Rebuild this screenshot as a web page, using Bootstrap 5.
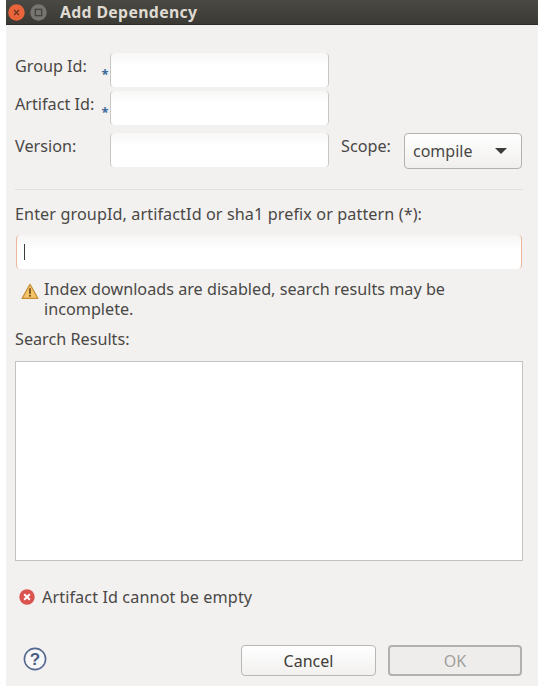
<!DOCTYPE html>
<html lang="en"><head><meta charset="utf-8"><title>Add Dependency</title>
<link href="https://cdn.jsdelivr.net/npm/bootstrap@5.3.0/dist/css/bootstrap.min.css" rel="stylesheet">
<style>
html,body{height:100%;margin:0;overflow:hidden}
body{background:#fff;font-family:"Noto Sans","Open Sans",sans-serif;font-size:16.2px;color:#4a4845;line-height:20px}
.dlg{margin-left:6px;height:686px;background:#f2f1f0;display:flex;flex-direction:column}
.tbar{height:25px;background:linear-gradient(#4b4943,#3b3933);color:#dfdbd2;font-weight:700;font-size:15.8px;letter-spacing:.35px;padding-left:2px;gap:5px;flex:none;border-bottom:1px solid #2e2c28}
.ttl{margin-left:8px}
.wbody{padding:28px 15px 0 9px;flex:1;display:flex;flex-direction:column}
.frow{display:flex;align-items:flex-start}
.flabel{width:85px;flex:none;padding-top:3px;white-space:nowrap}
.star{width:10px;flex:none;color:#3a6a9a;font-size:13px;font-weight:700;padding-top:15px;line-height:12px;text-align:center}
.tfield{height:34px;border-radius:4px;border:0;border-left:1px solid #c9c7c3;border-right:1px solid #c9c7c3;background:linear-gradient(#f8f8f7,#fff 40%);flex:none;box-shadow:none;padding:0}
.tf1{width:219px}
.gap1{height:4px}.gap2{height:8px}
.scl{margin-left:12px;flex:none;width:50px;padding-top:3px}
.combo{margin-left:13px;width:118px;height:36px;border:1px solid #b4b2ae;border-radius:4px;background:linear-gradient(#fff,#f0efee);display:flex;align-items:center;justify-content:space-between;padding:0 14px 0 8px;font-size:16px}
.arrow{width:0;height:0;border-left:6px solid transparent;border-right:6px solid transparent;border-top:6px solid #3c3b37}
.sep{height:1px;background:#e2e0dd;margin:20px 0 0 0}
.plabel{margin-top:14px;white-space:nowrap;letter-spacing:.09px}
.pinput{margin:11px 1px 0 1px;height:34px;border-radius:4px;border-left:1px solid #eeb79c;border-right:1px solid #eeb79c;background:linear-gradient(#f6f5f4,#fff 45%);display:flex;align-items:center;padding-left:7px}
.caretln{width:1px;height:16px;background:#3c3b37}
.warnrow{margin-top:10px;display:flex;line-height:20px}
.warnicon{margin:4px 5px 0 6px;flex:none}
.rlabel{margin-top:10px}
.results{margin-top:12px;height:200px;background:#fff;border:1px solid #c3c2bf;flex:none}
.errrow{margin-top:26px;display:flex;align-items:center;height:20px;padding-left:4px;gap:7px;letter-spacing:.1px}
.foot{margin-top:38px;display:flex;align-items:center;justify-content:space-between;padding-left:8px}
.helpic{display:block;margin-top:-4px}
.bbtn{width:135px;height:31px;border-radius:4px;border:1px solid #b9b7b3;background:linear-gradient(#fff,#f1f0ef);color:#3e3c39;font-size:16px;padding:0;line-height:1}
.okb{width:134px;margin-left:12px;border:2px solid #b3b1ad;background:#eeedec;color:#a19f9b;opacity:1}
.bbtn:disabled{border-color:#b3b1ad;background:#eeedec;color:#a19f9b;opacity:1}
.btnrow{margin-right:1px}
</style></head><body>
<div class="dlg">
  <div class="tbar d-flex align-items-center">
    <svg width="17" height="17" viewBox="0 0 14 14"><circle cx="7" cy="7" r="6.8" fill="#e9643a"/><path d="M5 5l4 4M9 5l-4 4" stroke="#6b3320" stroke-width="1.1"/></svg>
    <svg width="17" height="17" viewBox="0 0 14 14"><circle cx="7" cy="7" r="6.8" fill="#77756f"/><rect x="4.4" y="4.4" width="5.2" height="5.2" fill="none" stroke="#45433e" stroke-width="1.1"/></svg>
    <span class="ttl">Add Dependency</span>
  </div>
  <div class="wbody">
    <div class="frow"><div class="flabel">Group Id:</div><div class="star">*</div><div class="tfield tf1"></div></div>
    <div class="gap1"></div>
    <div class="frow"><div class="flabel">Artifact Id:</div><div class="star">*</div><div class="tfield tf1"></div></div>
    <div class="gap2"></div>
    <div class="frow"><div class="flabel">Version:</div><div class="star"></div><div class="tfield tf1"></div><div class="scl">Scope:</div><div class="combo"><span>compile</span><span class="arrow"></span></div></div>
    <div class="sep"></div>
    <div class="plabel">Enter groupId, artifactId or sha1 prefix or pattern (*):</div>
    <div class="pinput"><span class="caretln"></span></div>
    <div class="warnrow">
      <svg class="warnicon" width="18" height="17" viewBox="0 0 17 16"><path d="M8.5 1.2L16 14.6H1z" fill="#f3c46a" stroke="#c98d35" stroke-width="1.2" stroke-linejoin="round"/><rect x="7.7" y="5" width="1.6" height="5.2" fill="#6b4a14"/><circle cx="8.5" cy="12" r="1" fill="#6b4a14"/></svg>
      <div>Index downloads are disabled, search results may be<br>incomplete.</div>
    </div>
    <div class="rlabel">Search Results:</div>
    <div class="results"></div>
    <div class="errrow">
      <svg width="16" height="16" viewBox="0 0 16 16"><circle cx="8" cy="8" r="7.7" fill="#d9534f"/><path d="M5.2 5.2l5.6 5.6M10.8 5.2l-5.6 5.6" stroke="#fff" stroke-width="2"/></svg>
      <span>Artifact Id cannot be empty</span>
    </div>
    <div class="foot">
      <svg class="helpic" width="24" height="24" viewBox="0 0 24 24"><circle cx="12" cy="12" r="10.6" fill="#f7f7f8" stroke="#55688f" stroke-width="1.6"/><text x="12" y="18" text-anchor="middle" font-family="Liberation Sans" font-weight="700" font-size="17" fill="#4a5d85">?</text></svg>
      <div class="d-flex btnrow"><button class="btn bbtn">Cancel</button><button class="btn bbtn okb" disabled>OK</button></div>
    </div>
  </div>
</div>
<script src="https://cdn.jsdelivr.net/npm/bootstrap@5.3.0/dist/js/bootstrap.bundle.min.js"></script>
</body></html>
